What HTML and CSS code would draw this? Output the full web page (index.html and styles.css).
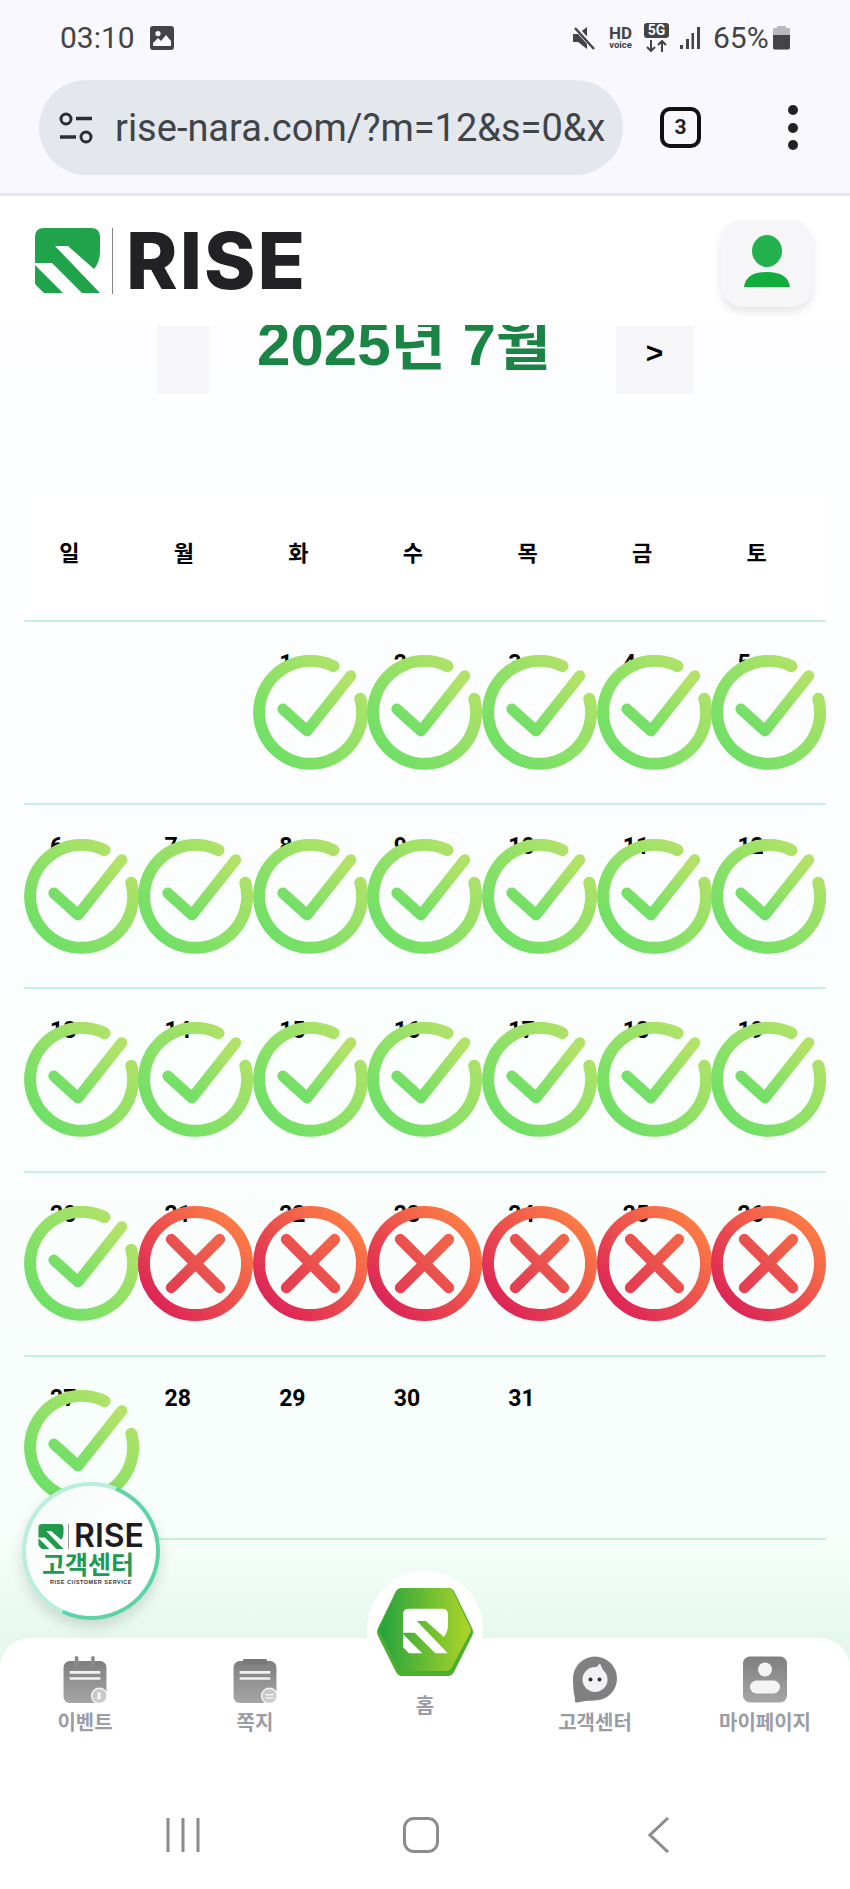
FILE: index.html
```html
<!DOCTYPE html>
<html lang="ko">
<head>
  <meta charset="UTF-8" />
  <meta name="viewport" content="width=device-width, initial-scale=1.0" />
  <title>RISE 출석체크</title>
  <link rel="stylesheet" href="styles.css">
</head>
<body>
  <!-- 공용 아이콘 -->
  <svg class="defs" width="0" height="0">
    <defs>
      <linearGradient id="okGrad" x1="0.1" y1="0.9" x2="0.9" y2="0.1">
        <stop offset="0" stop-color="#6fdf66" />
        <stop offset="1" stop-color="#b2e268" />
      </linearGradient>
      <linearGradient id="noGrad" x1="0.1" y1="0.9" x2="0.9" y2="0.1">
        <stop offset="0" stop-color="#dc2456" />
        <stop offset="1" stop-color="#fd7c45" />
      </linearGradient>
      <linearGradient id="crossGrad" x1="0.1" y1="0.9" x2="0.9" y2="0.1">
        <stop offset="0" stop-color="#e43f52" />
        <stop offset="1" stop-color="#f0624b" />
      </linearGradient>
      <linearGradient id="hexGrad" x1="0" y1="0" x2="1" y2="0">
        <stop offset="0" stop-color="#22a23e" />
        <stop offset="1" stop-color="#aed527" />
      </linearGradient>
      <linearGradient id="grayGrad" x1="0" y1="0" x2="0" y2="1">
        <stop offset="0" stop-color="#7f7f7f" />
        <stop offset="1" stop-color="#a6a6a6" />
      </linearGradient>
      <symbol id="ok" viewBox="0 0 100 100">
        <path d="M70 9.700 A44.800 44.800 0 1 0 93.300 38" fill="none" stroke="url(#okGrad)" stroke-width="10.4" stroke-linecap="round" />
        <path d="M26 47 L47 66 L85 18" fill="none" stroke="url(#okGrad)" stroke-width="9.6" stroke-linecap="round" stroke-linejoin="round" />
      </symbol>
      <symbol id="no" viewBox="0 0 100 100">
        <circle cx="50" cy="50" r="44.800" fill="none" stroke="url(#noGrad)" stroke-width="10.4" />
        <path d="M29 29 L71 71 M71 29 L29 71" fill="none" stroke="url(#crossGrad)" stroke-width="9.6" stroke-linecap="round" />
      </symbol>
      <symbol id="mark" viewBox="0 0 65 65">
        <path d="M0 9 Q0 0 9 0 H56 Q65 0 65 9 V24 Q65 34 59 41 L33 18 H20 L65 65 H47 L17 35 H0 V37 L28 65 H9 L0 56 Z" />
      </symbol>
    </defs>
  </svg>

  <div class="status-bar">
    <div class="status-left">
      <span class="clock">03:10</span>
      <svg class="ico-photo" viewBox="0 0 24 24"><path d="M3 0 H21 Q24 0 24 3 V21 Q24 24 21 24 H3 Q0 24 0 21 V3 Q0 0 3 0 Z M3 20 H21 V15 L16 9 L11 15 L8 12 L3 17 Z M8 5 A2.6 2.6 0 1 0 8 10.2 A2.6 2.6 0 1 0 8 5 Z" fill="#444" fill-rule="evenodd" /></svg>
    </div>
    <div class="status-right">
      <svg class="ico-mute" viewBox="0 0 24 24"><path d="M1 8 H6 L15 1 V23 L6 16 H1 Z" fill="#444" /><path d="M3 1 L23 23" stroke="#f8f8fe" stroke-width="5" /><path d="M3 2 L22 23" stroke="#444" stroke-width="2.4" /></svg>
      <span class="hd"><b>HD</b><i>voice</i></span>
      <span class="net"><b>5G</b><svg viewBox="0 0 25 12"><path d="M7 0 V11 M3 7 L7 11 L11 7 M18 12 V1 M14 5 L18 1 L22 5" fill="none" stroke="#444" stroke-width="2" /></svg></span>
      <svg class="ico-signal" viewBox="0 0 20 22"><path d="M0 18 H3 V22 H0 Z M6 12 H9 V22 H6 Z M11.5 6 H14 V22 H11.5 Z M17 0 H20 V22 H17 Z" fill="#444" /></svg>
      <span class="battery-text">65%</span>
      <span class="battery"><span class="battery-fill"></span></span>
    </div>
  </div>

  <div class="browser-bar">
    <div class="url-box">
      <svg class="ico-tune" viewBox="0 0 36 32"><circle cx="8" cy="7" r="5" fill="none" stroke="#2b2f33" stroke-width="3" /><path d="M18 6.500 H34 M2 25 H18" stroke="#2b2f33" stroke-width="3.500" /><circle cx="28" cy="25" r="5" fill="none" stroke="#2b2f33" stroke-width="3" /></svg>
      <span class="url-text">rise-nara.com/?m=12&amp;s=0&amp;x</span>
    </div>
    <span class="tab-count">3</span>
    <span class="kebab"><i></i><i></i><i></i></span>
  </div>

  <header class="site-head">
    <div class="logo">
      <svg class="logo-mark"><use href="#mark" /></svg>
      <span class="logo-bar"></span>
      <span class="logo-text">RISE</span>
    </div>
    <button class="user-btn">
      <svg viewBox="0 0 46 54"><ellipse cx="23" cy="16" rx="15" ry="16" fill="#22b14c" /><path d="M0 52 Q2 37 23 37 Q44 37 46 52 Z" fill="#12ad3d" /></svg>
    </button>
  </header>

  <main class="page">
    <div class="month-nav">
      <button class="month-btn month-prev"></button>
      <h1 class="month-title">2025년 7월</h1>
      <button class="month-btn month-next">&gt;</button>
    </div>

    <section class="calendar">
      <div class="week-head">
        <span>일</span><span>월</span><span>화</span><span>수</span><span>목</span><span>금</span><span>토</span>
      </div>
      <div class="week">
        <div class="day"></div>
        <div class="day"></div>
        <div class="day"><span class="num">1</span><svg class="stamp"><use href="#ok" /></svg></div>
        <div class="day"><span class="num">2</span><svg class="stamp"><use href="#ok" /></svg></div>
        <div class="day"><span class="num">3</span><svg class="stamp"><use href="#ok" /></svg></div>
        <div class="day"><span class="num">4</span><svg class="stamp"><use href="#ok" /></svg></div>
        <div class="day"><span class="num">5</span><svg class="stamp"><use href="#ok" /></svg></div>
      </div>
      <div class="week">
        <div class="day"><span class="num">6</span><svg class="stamp"><use href="#ok" /></svg></div>
        <div class="day"><span class="num">7</span><svg class="stamp"><use href="#ok" /></svg></div>
        <div class="day"><span class="num">8</span><svg class="stamp"><use href="#ok" /></svg></div>
        <div class="day"><span class="num">9</span><svg class="stamp"><use href="#ok" /></svg></div>
        <div class="day"><span class="num">10</span><svg class="stamp"><use href="#ok" /></svg></div>
        <div class="day"><span class="num">11</span><svg class="stamp"><use href="#ok" /></svg></div>
        <div class="day"><span class="num">12</span><svg class="stamp"><use href="#ok" /></svg></div>
      </div>
      <div class="week">
        <div class="day"><span class="num">13</span><svg class="stamp"><use href="#ok" /></svg></div>
        <div class="day"><span class="num">14</span><svg class="stamp"><use href="#ok" /></svg></div>
        <div class="day"><span class="num">15</span><svg class="stamp"><use href="#ok" /></svg></div>
        <div class="day"><span class="num">16</span><svg class="stamp"><use href="#ok" /></svg></div>
        <div class="day"><span class="num">17</span><svg class="stamp"><use href="#ok" /></svg></div>
        <div class="day"><span class="num">18</span><svg class="stamp"><use href="#ok" /></svg></div>
        <div class="day"><span class="num">19</span><svg class="stamp"><use href="#ok" /></svg></div>
      </div>
      <div class="week">
        <div class="day"><span class="num">20</span><svg class="stamp"><use href="#ok" /></svg></div>
        <div class="day"><span class="num">21</span><svg class="stamp"><use href="#no" /></svg></div>
        <div class="day"><span class="num">22</span><svg class="stamp"><use href="#no" /></svg></div>
        <div class="day"><span class="num">23</span><svg class="stamp"><use href="#no" /></svg></div>
        <div class="day"><span class="num">24</span><svg class="stamp"><use href="#no" /></svg></div>
        <div class="day"><span class="num">25</span><svg class="stamp"><use href="#no" /></svg></div>
        <div class="day"><span class="num">26</span><svg class="stamp"><use href="#no" /></svg></div>
      </div>
      <div class="week">
        <div class="day"><span class="num">27</span><svg class="stamp"><use href="#ok" /></svg></div>
        <div class="day"><span class="num">28</span></div>
        <div class="day"><span class="num">29</span></div>
        <div class="day"><span class="num">30</span></div>
        <div class="day"><span class="num">31</span></div>
        <div class="day"></div>
        <div class="day"></div>
      </div>
    </section>
  </main>

  <!-- 고객센터 플로팅 버튼 -->
  <a class="cs-float">
    <span class="cs-inner">
      <span class="cs-logo">
        <svg class="cs-mark"><use href="#mark" /></svg>
        <span class="cs-bar"></span>
        <span class="cs-rise">RISE</span>
      </span>
      <span class="cs-title">고객센터</span>
      <span class="cs-sub">RISE CUSTOMER SERVICE</span>
    </span>
  </a>

  <!-- 하단 메뉴 -->
  <nav class="tabbar">
    <div class="tabs">
      <a class="tab">
        <svg class="tab-ico" viewBox="0 0 42 46">
          <rect x="0" y="5" width="42" height="41" rx="6" fill="url(#grayGrad)" />
          <rect x="11" y="0" width="3.500" height="11" rx="1.700" fill="#8a8a8a" />
          <rect x="27" y="0" width="3.500" height="11" rx="1.700" fill="#8a8a8a" />
          <path d="M6 16 H36 M6 22 H36" stroke="#f2f2f2" stroke-width="2.500" />
          <circle cx="35" cy="39" r="7.500" fill="#c9c9c9" stroke="#f4f4f4" stroke-width="1.500" />
          <path d="M33 35.500 H36.500 V42.500 H33 Z" fill="#f1f1f1" />
        </svg>
        <span class="tab-label">이벤트</span>
      </a>
      <a class="tab">
        <svg class="tab-ico" viewBox="0 0 42 46">
          <rect x="0" y="5" width="42" height="41" rx="6" fill="url(#grayGrad)" />
          <rect x="9" y="3" width="24" height="5" rx="2" fill="#777" />
          <path d="M6 16 H36 M6 22 H36" stroke="#f2f2f2" stroke-width="2.500" />
          <circle cx="35" cy="39" r="7.500" fill="#c9c9c9" stroke="#f4f4f4" stroke-width="1.500" />
          <path d="M31 38 H39 M31 41 H39" stroke="#f1f1f1" stroke-width="1.500" />
        </svg>
        <span class="tab-label">쪽지</span>
      </a>
      <a class="tab tab-home">
        <span class="home-disc"></span>
        <svg class="hex" viewBox="0 0 96 90">
          <path d="M25 1 H71 Q75 1 77 4 L95 41 Q97 45 95 49 L77 85 Q75 89 71 89 H25 Q21 89 19 85 L1 49 Q-1 45 1 41 L19 4 Q21 1 25 1 Z" fill="#4bb02f" />
          <path d="M26 1 H70 Q74 1 76 4 L93 40 Q95 43 93 46 L75 80 Q73 84 69 84 H27 Q23 84 21 80 L3 46 Q1 43 3 40 L20 4 Q22 1 26 1 Z" fill="url(#hexGrad)" />
          <svg x="26" y="20" width="45" height="48" viewBox="0 0 65 65" fill="#fff"><use href="#mark" width="65" height="65" /></svg>
        </svg>
        <span class="tab-label">홈</span>
      </a>
      <a class="tab">
        <svg class="tab-ico" viewBox="0 0 44 46">
          <path d="M22 0 A22 22 0 1 1 22 44 Q12 44 4 46 Q1 46 2 42 Q0 34 0 22 A22 22 0 0 1 22 0 Z" fill="#808080" />
          <circle cx="22" cy="23" r="12.500" fill="#f2f2f4" />
          <path d="M22 12 L27 7 L31 16 Z" fill="#f2f2f4" />
          <circle cx="17.500" cy="23" r="2" fill="#333" />
          <circle cx="26.500" cy="23" r="2" fill="#333" />
        </svg>
        <span class="tab-label">고객센터</span>
      </a>
      <a class="tab">
        <svg class="tab-ico" viewBox="0 0 44 46">
          <rect width="44" height="46" rx="7" fill="url(#grayGrad)" />
          <circle cx="22" cy="13" r="7" fill="#f4f4f4" />
          <rect x="7" y="24" width="30" height="13" rx="6.500" fill="#f4f4f4" />
        </svg>
        <span class="tab-label">마이페이지</span>
      </a>
    </div>
    <div class="sys-nav">
      <span class="sys-cell"><svg class="sys-recent" viewBox="0 0 34 34"><path d="M2 0 V34 M17 0 V34 M32 0 V34" stroke="#8c8c8c" stroke-width="3" /></svg></span>
      <span class="sys-cell"><span class="sys-home"></span></span>
      <span class="sys-cell"><svg class="sys-back" viewBox="0 0 22 36"><path d="M20 1 L2 18 L20 35" fill="none" stroke="#8c8c8c" stroke-width="3" /></svg></span>
    </div>
  </nav>
</body>
</html>
```

FILE: styles.css
```css
html, body {
  margin: 0;
  padding: 0;
}

body {
  position: relative;
  width: 850px;
  height: 1889px;
  overflow: hidden;
  display: flex;
  flex-direction: column;
  background-color: #f8f8fe;
  font-family: "Liberation Sans", "Noto Sans CJK KR", sans-serif;
}

.defs {
  position: absolute;
}

button {
  border: none;
  padding: 0;
  font-family: inherit;
}

/* 상태바 */
.status-bar {
  height: 75px;
  flex: none;
  display: flex;
  justify-content: space-between;
  align-items: center;
  padding: 0 60px 0 60px;
  color: #444;
  font-family: Roboto, sans-serif;
}

.status-left, .status-right {
  display: flex;
  align-items: center;
}

.clock {
  font-size: 30px;
}

.ico-photo {
  width: 24px;
  height: 24px;
  margin-left: 15px;
}

.ico-mute {
  width: 24px;
  height: 24px;
}

.hd {
  display: flex;
  flex-direction: column;
  align-items: center;
  margin-left: 11px;
  width: 27px;
  line-height: 1;
}

.hd b {
  font-size: 17px;
  line-height: 14px;
}

.hd i {
  font-style: normal;
  font-weight: 700;
  font-size: 9.500px;
  line-height: 9px;
}

.net {
  display: flex;
  flex-direction: column;
  width: 25px;
  margin-left: 10px;
}

.net b {
  background: #444;
  color: #f8f8fe;
  border-radius: 3px;
  height: 15px;
  font-size: 14px;
  line-height: 15px;
  text-align: center;
}

.net svg {
  display: block;
  margin-top: 2px;
  height: 12px;
}

.ico-signal {
  width: 20px;
  height: 22px;
  margin-left: 11px;
}

.battery-text {
  font-size: 30px;
  margin-left: 13px;
  width: 56px;
}

.battery {
  position: relative;
  width: 17px;
  height: 24px;
  margin-left: 4px;
  border-radius: 3px;
  background-color: #b9b9bd;
  overflow: hidden;
  clip-path: polygon(25% 0, 75% 0, 75% 10%, 100% 10%, 100% 100%, 0 100%, 0 10%, 25% 10%);
}

.battery-fill {
  position: absolute;
  left: 0;
  right: 0;
  bottom: 0;
  height: 15px;
  background-color: #444;
}

/* 브라우저 주소창 */
.browser-bar {
  height: 121px;
  flex: none;
  box-sizing: border-box;
  display: flex;
  align-items: flex-start;
  padding: 5px 0 0 39px;
  border-bottom: 3px solid #e4e4ea;
}

.url-box {
  width: 584px;
  height: 95px;
  flex: none;
  display: flex;
  align-items: center;
  border-radius: 48px;
  background-color: #e4e7ec;
  padding-left: 19px;
  box-sizing: border-box;
  overflow: hidden;
}

.ico-tune {
  width: 36px;
  height: 32px;
  flex: none;
}

.url-text {
  width: 490px;
  flex: none;
  margin-left: 21px;
  overflow: hidden;
  white-space: nowrap;
  font-family: Roboto, sans-serif;
  font-size: 38px;
  color: #3f4449;
}

.tab-count {
  width: 41px;
  height: 41px;
  margin: 27px 0 0 37px;
  box-sizing: border-box;
  border: 4px solid #111;
  border-radius: 10px;
  text-align: center;
  font-family: Roboto, sans-serif;
  font-weight: 700;
  font-size: 21px;
  line-height: 33px;
  color: #222;
}

.kebab {
  display: flex;
  flex-direction: column;
  gap: 7.500px;
  margin: 25px 0 0 87px;
}

.kebab i {
  display: block;
  width: 10px;
  height: 10px;
  border-radius: 50%;
  background-color: #222;
}

/* 사이트 헤더 */
.site-head {
  position: relative;
  z-index: 2;
  flex: none;
  height: 129px;
  box-sizing: border-box;
  display: flex;
  justify-content: space-between;
  align-items: center;
  padding: 0 37px 0 35px;
  background-color: #fff;
}

.logo {
  display: flex;
  align-items: center;
}

.logo-mark {
  width: 65px;
  height: 65px;
  fill: #21a34c;
}

.logo-bar {
  width: 1px;
  height: 66px;
  margin-left: 12px;
  background-color: #888;
}

.logo-text {
  margin-left: 13px;
  font-family: Inter, sans-serif;
  font-weight: 800;
  font-size: 78px;
  line-height: 66px;
  letter-spacing: 2px;
  color: #222224;
}

.user-btn {
  width: 92px;
  height: 87px;
  margin-top: 6px;
  display: flex;
  justify-content: center;
  align-items: center;
  border-radius: 22px;
  background-color: #f6f6f9;
  box-shadow: 0 5px 9px rgba(0, 0, 0, 0.1);
}

.user-btn svg {
  width: 46px;
  height: 54px;
  margin-bottom: 4px;
}

/* 본문 */
.page {
  flex: 1;
  background: linear-gradient(#fdfdff 0%, #fbfefe 40%, #f6fefa 100%);
}

.month-nav {
  display: flow-root;
  position: relative;
  height: 69px;
  margin-bottom: 94px;
}

.month-btn {
  position: absolute;
  top: 1px;
  height: 68px;
  background-color: #f6f6f9;
  color: #000;
  font-weight: 700;
  font-size: 30px;
}

.month-prev {
  left: 157px;
  width: 52px;
}

.month-next {
  left: 616px;
  width: 77px;
  padding-bottom: 14px;
}

.month-title {
  margin: -15px 0 0 -42px;
  text-align: center;
  font-size: 60px;
  line-height: 70px;
  font-weight: 700;
  color: #1a8444;
}

.calendar {
  margin: 0 24px;
}

.week-head {
  height: 133.500px;
  box-sizing: border-box;
  display: grid;
  grid-template-columns: repeat(7, 1fr);
  align-items: center;
  padding-bottom: 6px;
  background-color: #fff;
  border-bottom: 2px solid #c7efdf;
}

.week-head span {
  padding-right: 24px;
  text-align: center;
  font-size: 22px;
  font-weight: 700;
  color: #000;
}

.week {
  height: 183.800px;
  box-sizing: border-box;
  display: grid;
  grid-template-columns: repeat(7, 1fr);
  border-bottom: 2px solid #c7efdf;
}

.day {
  position: relative;
  padding: 28px 0 0 26px;
}

.num {
  font-family: Roboto, sans-serif;
  font-size: 23px;
  font-weight: 700;
  line-height: 27px;
  color: #000;
}

.stamp {
  position: absolute;
  left: 50%;
  top: 50%;
  width: 115px;
  height: 115px;
  margin: -57.500px 0 0 -57.500px;
}

/* 고객센터 플로팅 */
.cs-float {
  position: absolute;
  z-index: 5;
  left: 22px;
  top: 1482px;
  width: 138px;
  height: 138px;
  box-sizing: border-box;
  padding: 4px;
  border-radius: 50%;
  background: conic-gradient(#b8eedb 0deg 22deg, #5fd3a8 22deg 205deg, #b8eedb 205deg 360deg);
  box-shadow: 0 6px 14px rgba(0, 0, 0, 0.14);
}

.cs-inner {
  height: 100%;
  display: flex;
  flex-direction: column;
  align-items: center;
  border-radius: 50%;
  background: linear-gradient(135deg, #f4fbf8, #fff 55%);
  padding-top: 37px;
  box-sizing: border-box;
}

.cs-logo {
  display: flex;
  align-items: center;
}

.cs-mark {
  width: 26px;
  height: 25px;
  fill: #219a4b;
}

.cs-bar {
  width: 1px;
  height: 25px;
  margin-left: 4px;
  background-color: #999;
}

.cs-rise {
  margin-left: 5px;
  font-family: Inter, sans-serif;
  font-weight: 600;
  font-size: 32px;
  line-height: 26px;
  color: #1d1d1f;
}

.cs-title {
  margin: 2px 6px 0 0;
  font-family: "Noto Sans CJK KR", sans-serif;
  font-size: 25px;
  line-height: 25px;
  font-weight: 700;
  color: #1f9a52;
}

.cs-sub {
  margin-top: 3px;
  font-size: 5.500px;
  line-height: 7px;
  font-weight: 700;
  letter-spacing: 0.5px;
  color: #333;
  white-space: nowrap;
}

/* 하단 메뉴 */
.tabbar {
  position: absolute;
  z-index: 4;
  left: 0;
  right: 0;
  top: 1638px;
  bottom: 0;
  display: flex;
  flex-direction: column;
  border-radius: 30px 30px 0 0;
  background-color: #fff;
}

.tabbar::before {
  content: "";
  position: absolute;
  z-index: -1;
  left: 0;
  right: 0;
  top: -98px;
  height: 130px;
  background: linear-gradient(#f6fefa, #e6f8ee 75%);
}

.tabbar::after {
  content: "";
  position: absolute;
  z-index: -1;
  inset: 0;
  border-radius: 30px 30px 0 0;
  background-color: #fff;
}

.tabs {
  display: grid;
  grid-template-columns: repeat(5, 1fr);
  padding-top: 18px;
}

.tab {
  position: relative;
  display: flex;
  flex-direction: column;
  align-items: center;
}

.tab-ico {
  width: 44px;
  height: 47px;
}

.tab-label {
  margin-top: 4px;
  font-family: "Noto Sans CJK KR", sans-serif;
  font-size: 20px;
  line-height: 29px;
  font-weight: 700;
  color: #9a9ca6;
}

.tab-home {
  margin-top: -69px;
}

.home-disc {
  position: absolute;
  z-index: -1;
  left: 50%;
  top: -16px;
  width: 116px;
  height: 116px;
  margin-left: -58px;
  border-radius: 50%;
  background-color: #fff;
}

.hex {
  position: relative;
  width: 96px;
  height: 90px;
}

.tab-home .tab-label {
  position: relative;
  margin-top: 13px;
}

.sys-nav {
  margin-top: auto;
  padding: 0 8px 36px 0;
  display: grid;
  grid-template-columns: repeat(3, 238px);
  justify-content: center;
}

.sys-cell {
  display: flex;
  justify-content: center;
  align-items: center;
  height: 36px;
}

.sys-recent {
  width: 34px;
  height: 34px;
}

.sys-home {
  width: 36px;
  height: 36px;
  box-sizing: border-box;
  border: 3px solid #8c8c8c;
  border-radius: 11px;
}

.sys-back {
  width: 22px;
  height: 36px;
}
```
